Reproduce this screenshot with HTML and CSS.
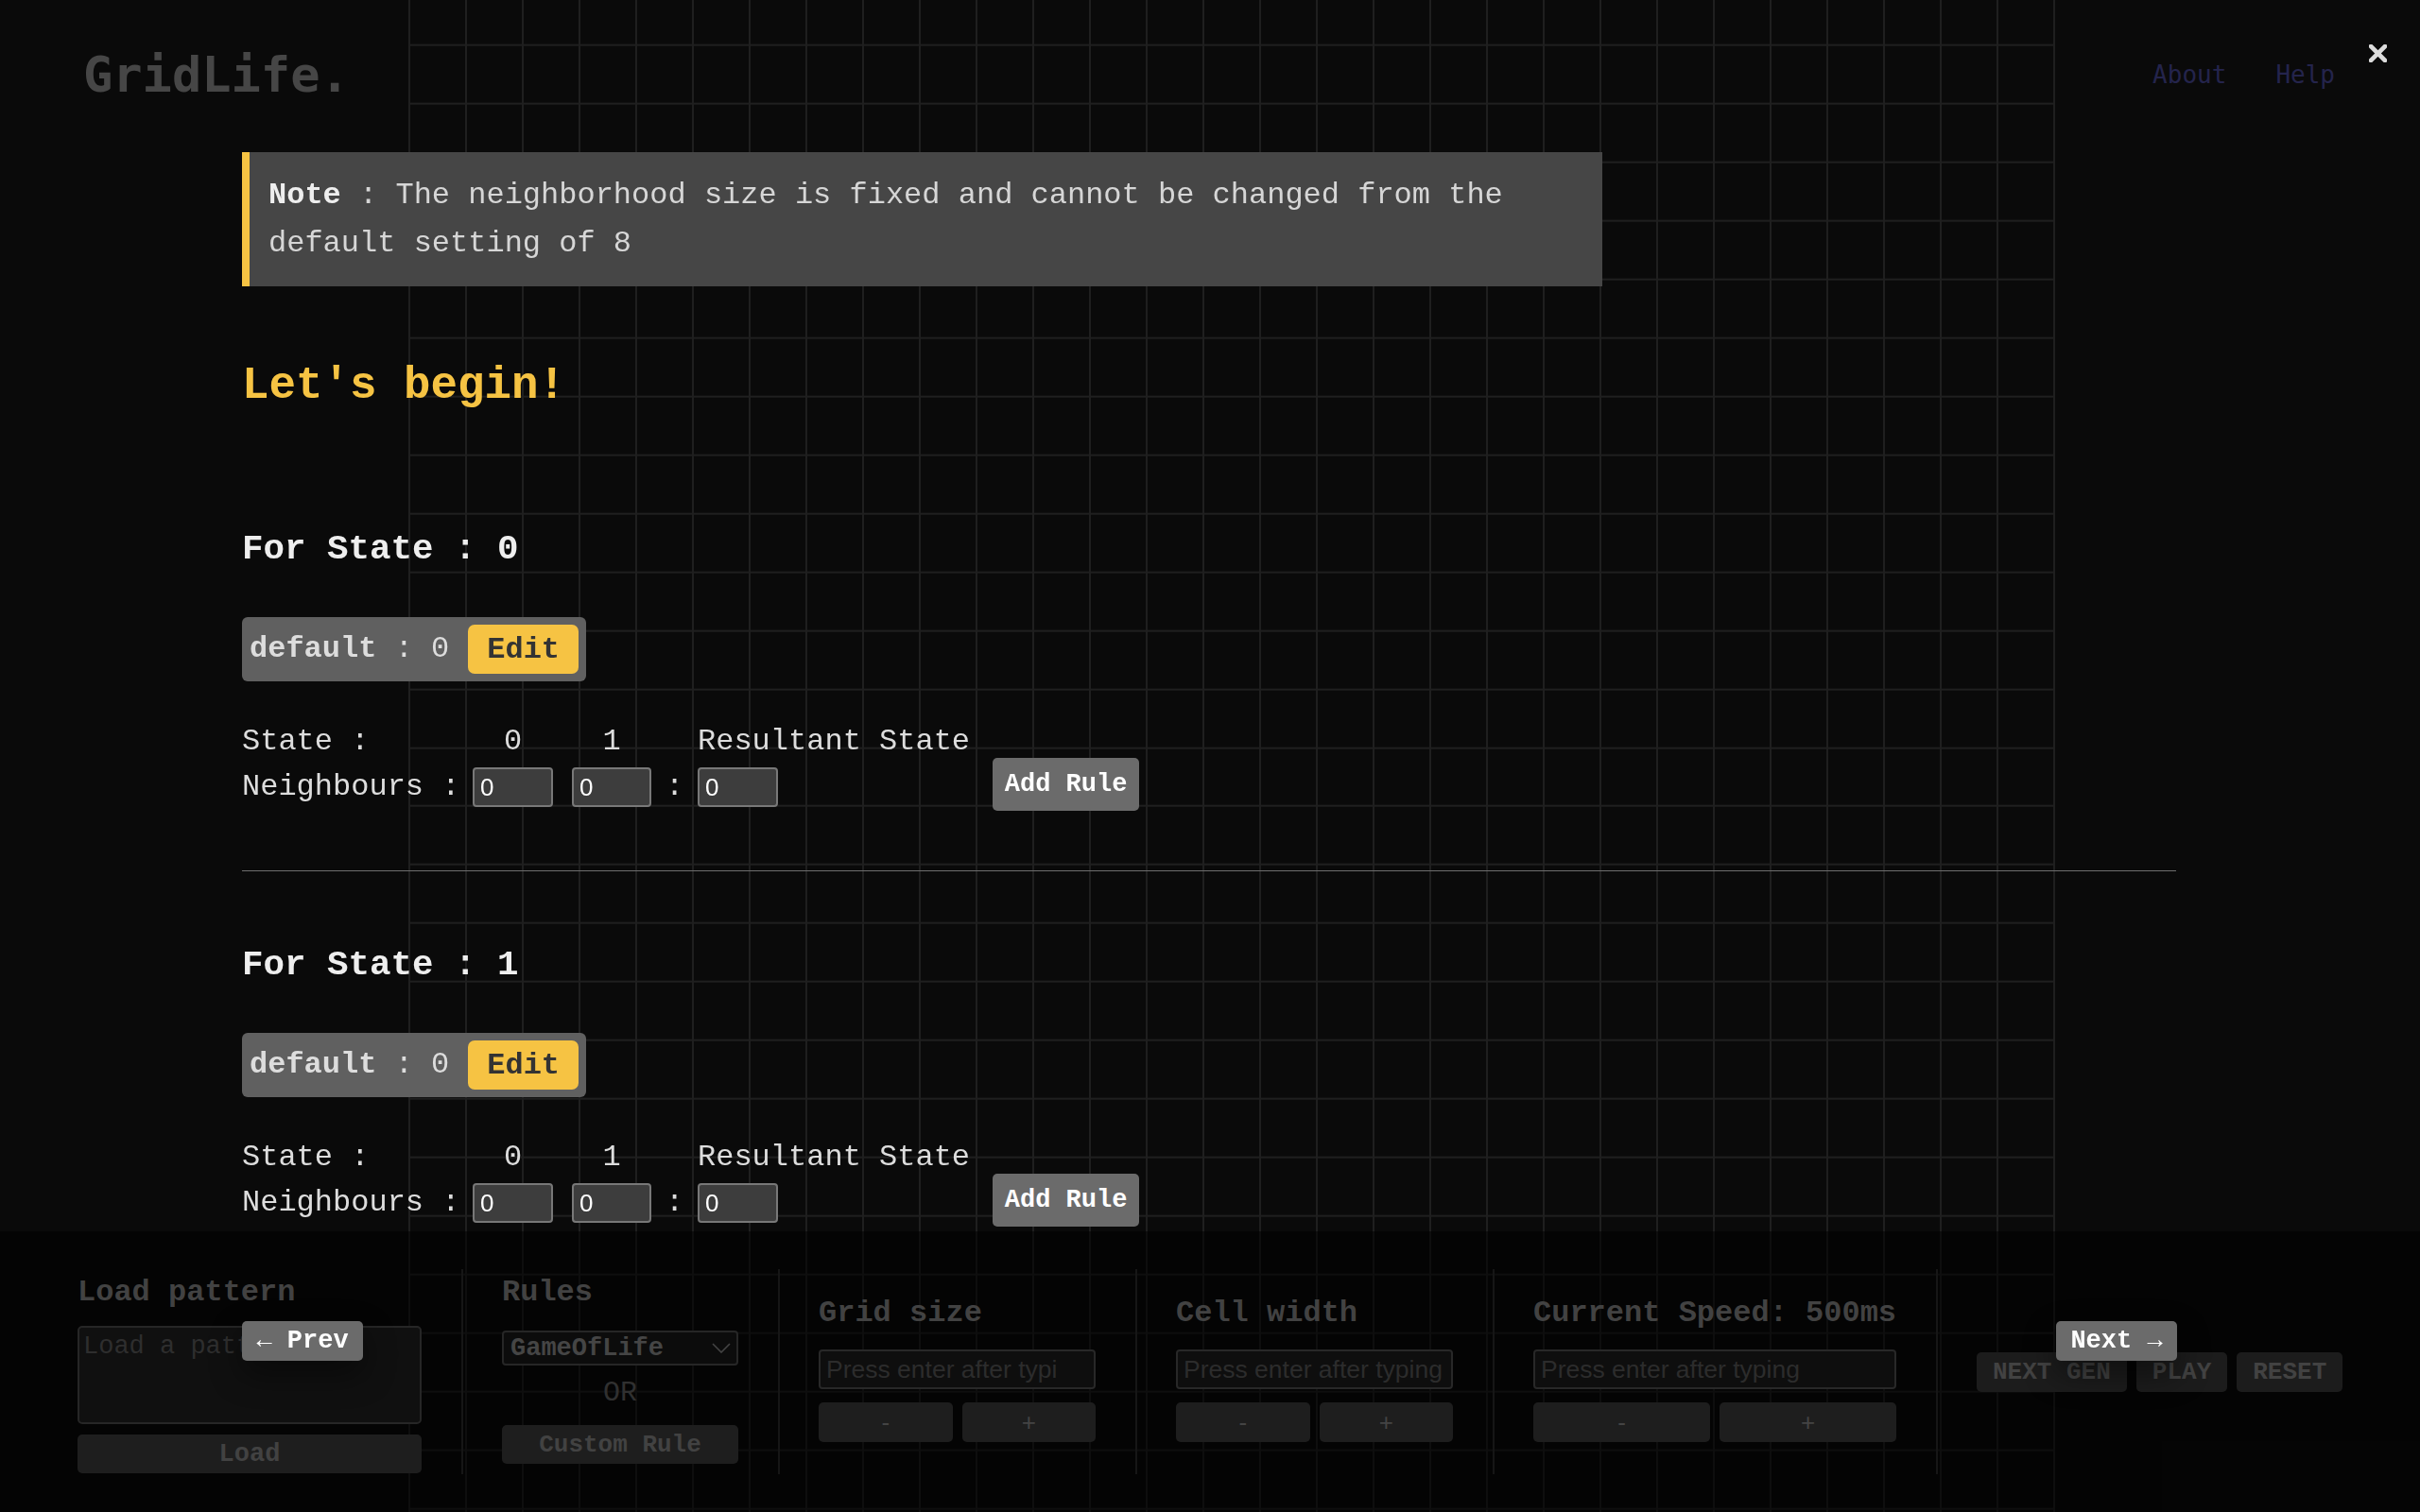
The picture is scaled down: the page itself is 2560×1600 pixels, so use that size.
FILE: index.html
```html
<!DOCTYPE html>
<html lang="en">
<head>
<meta charset="utf-8">
<title>GridLife.</title>
<link rel="stylesheet" href="styles.css">
</head>
<body>
<div class="app">
  <div class="board"></div>

  <header class="topbar">
    <div class="logo">GridLife.</div>
    <nav class="nav">
      <a href="#" class="nav-link">About</a>
      <a href="#" class="nav-link">Help</a>
    </nav>
  </header>

  <main class="stage"></main>

  <footer class="controls">
    <section class="ctl ctl-load">
      <h3 class="ctl-title">Load pattern</h3>
      <textarea class="pattern" placeholder="Load a pattern"></textarea>
      <button class="ctl-btn ctl-btn-wide load-btn">Load</button>
    </section>
    <div class="divider"></div>
    <section class="ctl ctl-rules">
      <h3 class="ctl-title">Rules</h3>
      <div class="select">
        <span>GameOfLife</span>
        <svg class="chev" width="20" height="11" viewBox="0 0 20 11"><polyline points="1,1 10,10 19,1" fill="none" stroke="#444" stroke-width="1.6"/></svg>
      </div>
      <div class="or">OR</div>
      <button class="ctl-btn ctl-btn-wide custom-btn">Custom Rule</button>
    </section>
    <div class="divider"></div>
    <section class="ctl ctl-num ctl-grid">
      <h3 class="ctl-title">Grid size</h3>
      <input class="num-input num-input-spin" type="text" placeholder="Press enter after typing">
      <div class="pm">
        <button class="ctl-btn pm-btn">-</button>
        <button class="ctl-btn pm-btn">+</button>
      </div>
    </section>
    <div class="divider"></div>
    <section class="ctl ctl-num ctl-cell">
      <h3 class="ctl-title">Cell width</h3>
      <input class="num-input" type="text" placeholder="Press enter after typing">
      <div class="pm">
        <button class="ctl-btn pm-btn">-</button>
        <button class="ctl-btn pm-btn">+</button>
      </div>
    </section>
    <div class="divider"></div>
    <section class="ctl ctl-num ctl-speed">
      <h3 class="ctl-title">Current Speed: 500ms</h3>
      <input class="num-input" type="text" placeholder="Press enter after typing">
      <div class="pm">
        <button class="ctl-btn pm-btn">-</button>
        <button class="ctl-btn pm-btn">+</button>
      </div>
    </section>
    <div class="divider"></div>
    <section class="ctl-actions">
      <button class="ctl-btn act-btn">NEXT GEN</button>
      <button class="ctl-btn act-btn">PLAY</button>
      <button class="ctl-btn act-btn">RESET</button>
    </section>
  </footer>
</div>

<div class="modal">
  <button class="close" aria-label="Close">
    <svg width="19" height="19" viewBox="0 0 19 19"><path d="M2 2 L17 17 M17 2 L2 17" stroke="#dcdcdc" stroke-width="4.6" stroke-linecap="square" fill="none"/></svg>
  </button>

  <div class="modal-scroll">
    <div class="modal-content">
      <div class="note"><b class="note-key">Note</b> : The neighborhood size is fixed and cannot be changed from the default setting of 8</div>

      <h1 class="begin">Let's begin!</h1>

      <section class="state-block">
        <h2 class="state-title">For State : 0</h2>
        <div class="default-box"><span class="default-text"><b>default</b> : 0</span><button class="edit">Edit</button></div>
        <div class="rule-row">
          <div class="rule-table">
            <span class="lbl">State :</span>
            <span class="hd hd-1">0</span>
            <span class="hd hd-2">1</span>
            <span></span>
            <span class="hd-res">Resultant State</span>
            <span class="lbl">Neighbours :</span>
            <input class="cell-input" type="text" value="0">
            <input class="cell-input cell-input-2" type="text" value="0">
            <span class="colon">:</span>
            <input class="cell-input" type="text" value="0">
          </div>
          <button class="add-rule">Add Rule</button>
        </div>
      </section>

      <hr class="sep">

      <section class="state-block state-block-next">
        <h2 class="state-title">For State : 1</h2>
        <div class="default-box"><span class="default-text"><b>default</b> : 0</span><button class="edit">Edit</button></div>
        <div class="rule-row">
          <div class="rule-table">
            <span class="lbl">State :</span>
            <span class="hd hd-1">0</span>
            <span class="hd hd-2">1</span>
            <span></span>
            <span class="hd-res">Resultant State</span>
            <span class="lbl">Neighbours :</span>
            <input class="cell-input" type="text" value="0">
            <input class="cell-input cell-input-2" type="text" value="0">
            <span class="colon">:</span>
            <input class="cell-input" type="text" value="0">
          </div>
          <button class="add-rule">Add Rule</button>
        </div>
      </section>
    </div>
  </div>

  <div class="modal-nav">
    <button class="nav-btn">&larr; Prev</button>
    <button class="nav-btn">Next &rarr;</button>
  </div>
</div>
</body>
</html>
```
FILE: styles.css
```css
* { box-sizing: border-box; }

html, body {
  margin: 0;
  padding: 0;
}

body {
  width: 2560px;
  height: 1600px;
  overflow: hidden;
  background: #0a0a0a;
  font-family: "Liberation Mono", "Courier New", monospace;
  color: #dddddd;
}

/* ---------- base app ---------- */
.app {
  position: relative;
  height: 1600px;
  display: flex;
  flex-direction: column;
}

.board {
  position: absolute;
  top: 0;
  bottom: 0;
  left: 432px;
  width: 1742px;
  background-image:
    repeating-linear-gradient(to right, #1f1f1f 0 2px, transparent 2px 60px),
    repeating-linear-gradient(to bottom, #1f1f1f 0 2px, transparent 2px 61.96px);
  background-position: 0 0, 0 46.7px;
}

.topbar {
  position: relative;
  z-index: 1;
  height: 110px;
  flex: none;
  display: flex;
  justify-content: space-between;
  align-items: center;
  padding: 48px 90px 0 88px;
}

.logo {
  font-family: "DejaVu Sans Mono", monospace;
  font-weight: bold;
  font-size: 52px;
  line-height: 62px;
  color: #464646;
}

.nav {
  display: flex;
  gap: 52px;
  font-family: "DejaVu Sans Mono", monospace;
  font-size: 26px;
}

.nav-link {
  color: #24244c;
  text-decoration: none;
}

.stage { flex: 1; }

/* ---------- bottom controls ---------- */
.controls {
  position: relative;
  z-index: 1;
  flex: none;
  height: 297px;
  background: rgba(0, 0, 0, 0.55);
  display: flex;
  align-items: center;
  gap: 41.5px;
  padding-left: 82px;
}

.divider {
  width: 2px;
  height: 217px;
  background: #161616;
  flex: none;
}

.ctl {
  display: flex;
  flex-direction: column;
  flex: none;
}

.ctl-title {
  margin: 0;
  font-size: 32px;
  line-height: 36px;
  font-weight: bold;
  color: #424242;
  white-space: nowrap;
}

.ctl-load { width: 364px; padding-top: 6px; }
.ctl-rules { width: 250px; padding-bottom: 4px; }
.ctl-grid, .ctl-cell { width: 293px; }
.ctl-speed { width: 384px; }
.ctl-num { padding-bottom: 5px; }

.pattern {
  margin-top: 17px;
  width: 364px;
  height: 104px;
  resize: none;
  background: #101010;
  border: 2px solid #262626;
  border-radius: 5px;
  padding: 5px 4px;
  font-family: "Liberation Mono", monospace;
  font-size: 27px;
  color: #333;
}
.pattern::placeholder { color: #2e2e2e; }

.ctl-btn {
  border: 0;
  border-radius: 5px;
  background: #1e1e1e;
  color: #424242;
  font-family: "Liberation Mono", monospace;
  font-weight: bold;
  font-size: 27px;
  padding: 0;
  height: 41px;
}

.ctl-btn-wide { width: 100%; }
.load-btn { margin-top: 11px; }

.select {
  margin-top: 22px;
  height: 37px;
  display: flex;
  align-items: center;
  justify-content: space-between;
  padding: 0 6px 0 7px;
  border: 2px solid #262626;
  border-radius: 4px;
  background: #0c0c0c;
  font-size: 27px;
  font-weight: bold;
  color: #454545;
}

.chev { display: block; }

.or {
  margin-top: 12px;
  height: 34px;
  line-height: 34px;
  text-align: center;
  font-size: 30px;
  color: #303030;
}

.custom-btn { margin-top: 17px; font-size: 26px; }

.num-input {
  margin-top: 20px;
  width: 100%;
  height: 42px;
  background: #0e0e0e;
  border: 2px solid #282828;
  border-radius: 4px;
  padding: 0 6px;
  font-family: "Liberation Sans", Arial, sans-serif;
  font-size: 26.5px;
  color: #444;
}
.num-input::placeholder { color: #2c2c2c; }
.num-input-spin { padding-right: 40px; }

.pm {
  margin-top: 14px;
  display: flex;
  gap: 10px;
}

.pm-btn {
  flex: 1;
  height: 42px;
  font-family: "Liberation Sans", Arial, sans-serif;
  font-weight: normal;
  font-size: 26px;
  color: #444;
}

.ctl-actions {
  display: flex;
  gap: 10px;
  flex: none;
}

.act-btn {
  height: 42px;
  padding: 0 17px;
  font-size: 26px;
  background: #1c1c1c;
}

/* ---------- modal ---------- */
.modal {
  position: fixed;
  inset: 0;
  z-index: 10;
  display: flex;
  flex-direction: column;
}

.close {
  position: absolute;
  top: 47px;
  right: 35px;
  width: 19px;
  height: 19px;
  padding: 0;
  border: 0;
  background: none;
  line-height: 0;
}

.modal-scroll {
  flex: none;
  height: 1303px;
  overflow: hidden;
  padding: 0 258px 0 256px;
}

.modal-content {
  padding-top: 161px;
}

.note {
  width: 1439px;
  background: #464646;
  border-left: 8px solid #f6c343;
  padding: 20px;
  font-size: 32px;
  line-height: 51.2px;
  color: #d6d6d6;
}

.note-key { color: #eeeeee; }

.begin {
  margin: 78px 0 0;
  font-size: 47.5px;
  line-height: 54px;
  font-weight: bold;
  color: #f6c343;
}

.state-block { padding-top: 125px; }
.state-block-next { padding-top: 78px; }

.state-title {
  margin: 0;
  font-size: 37.5px;
  line-height: 43px;
  font-weight: bold;
  color: #eeeeee;
}

.default-box {
  margin-top: 50px;
  display: inline-flex;
  align-items: center;
  gap: 20px;
  padding: 8px;
  background: #606060;
  border-radius: 6px;
  font-size: 32px;
  line-height: 36px;
  color: #dddddd;
}

.edit {
  height: 52px;
  padding: 0 20px;
  border: 0;
  border-radius: 7px;
  background: #f6c343;
  color: #333333;
  font-family: "Liberation Mono", monospace;
  font-weight: bold;
  font-size: 32px;
}

.rule-row {
  margin-top: 46px;
  display: flex;
  align-items: flex-end;
  gap: 24px;
}

.rule-table {
  display: grid;
  grid-template-columns: 244px 105px 84px 49px auto;
  row-gap: 9px;
  align-items: center;
  padding-bottom: 4px;
  font-size: 32px;
  line-height: 36px;
  color: #dddddd;
  white-space: nowrap;
}

.hd-1 { width: 85px; text-align: center; }
.hd-2 { width: 84px; text-align: center; }
.colon { text-align: center; }

.cell-input {
  width: 85px;
  height: 42px;
  background: #3d3d3d;
  border: 2px solid #787878;
  border-radius: 4px;
  padding: 0 6px;
  font-family: "Liberation Sans", Arial, sans-serif;
  font-size: 26px;
  color: #ffffff;
}
.cell-input-2 { width: 84px; }

.add-rule {
  width: 155px;
  height: 56px;
  border: 0;
  border-radius: 5px;
  background: #6b6b6b;
  color: #ffffff;
  font-family: "Liberation Mono", monospace;
  font-weight: bold;
  font-size: 27px;
}

.sep {
  margin: 63px 0 0;
  border: 0;
  height: 1px;
  background: #6e6e6e;
}

.modal-nav {
  display: flex;
  justify-content: space-between;
  padding: 95px 257px 0 256px;
}

.nav-btn {
  width: 128px;
  height: 42px;
  border: 0;
  border-radius: 5px;
  background: #6b6b6b;
  color: #ffffff;
  font-family: "Liberation Mono", monospace;
  font-weight: bold;
  font-size: 27px;
  padding: 0;
  box-shadow: 0 14px 34px rgba(0, 0, 0, 0.45);
}
```
